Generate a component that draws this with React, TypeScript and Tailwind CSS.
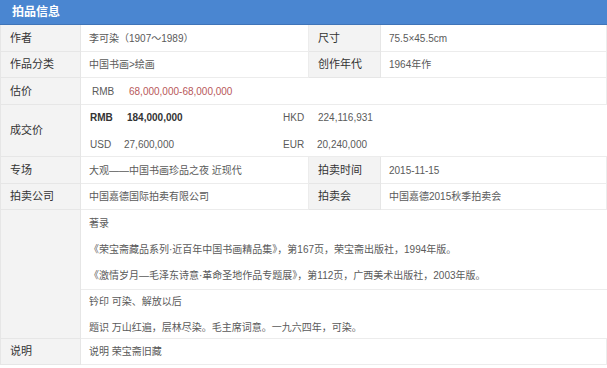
const font = { fontFamily: '"Liberation Sans", "Noto Sans CJK SC", sans-serif' };

const Label = ({ children, className = "" }: { children?: React.ReactNode; className?: string }) => (
  <div className={`bg-[#f3f3f3] border-b border-r border-[#e6e6e6] pl-[9px] flex items-center text-[11px] text-[#333] ${className}`}>
    {children}
  </div>
);

const Value = ({ children, className = "" }: { children?: React.ReactNode; className?: string }) => (
  <div className={`bg-white border-b border-r border-[#ececec] pl-[8px] flex items-center text-[10px] text-[#5a5a5a] ${className}`}>
    {children}
  </div>
);

export default function App() {
  return (
    <div className="w-[607px] h-[368px] bg-white overflow-hidden" style={font}>
      <div className="h-[25px] bg-[#4a86d1] flex items-center pl-[12px] text-[12px] font-bold text-white border-b border-[#3f74b8]">
        拍品信息
      </div>
      <div className="grid grid-cols-[80px_228px_72px_1fr] border-l border-[#e6e6e6]">
        <Label className="h-[27px]">作者</Label>
        <Value>李可染（1907～1989）</Value>
        <Label className="pl-[4px]">尺寸</Label>
        <Value className="pl-[6px]">75.5×45.5cm</Value>

        <Label className="h-[26px]">作品分类</Label>
        <Value>中国书画&gt;绘画</Value>
        <Label className="pl-[4px]">创作年代</Label>
        <Value className="pl-[6px]">1964年作</Value>

        <Label className="h-[27px]">估价</Label>
        <Value className="col-span-3 pl-[11px]">
          <span className="w-[37px]">RMB</span>
          <span className="text-[#b8585a]">68,000,000-68,000,000</span>
        </Value>

        <Label className="h-[52px]">成交价</Label>
        <div className="col-span-3 bg-white border-b border-[#ececec] pl-[9px] flex flex-col justify-center gap-[12px] text-[10px] text-[#5a5a5a]">
          <div className="flex">
            <span className="w-[193px] flex">
              <span className="w-[37px] font-bold text-[#333]">RMB</span>
              <span className="font-bold text-[#333]">184,000,000</span>
            </span>
            <span className="w-[35px]">HKD</span>
            <span>224,116,931</span>
          </div>
          <div className="flex">
            <span className="w-[193px] flex">
              <span className="w-[34px]">USD</span>
              <span>27,600,000</span>
            </span>
            <span className="w-[34px]">EUR</span>
            <span>20,240,000</span>
          </div>
        </div>

        <Label className="h-[27px]">专场</Label>
        <Value>大观——中国书画珍品之夜 近现代</Value>
        <Label className="pl-[4px]">拍卖时间</Label>
        <Value className="pl-[6px]">2015-11-15</Value>

        <Label className="h-[26px]">拍卖公司</Label>
        <Value>中国嘉德国际拍卖有限公司</Value>
        <Label className="pl-[4px]">拍卖会</Label>
        <Value className="pl-[6px]">中国嘉德2015秋季拍卖会</Value>

        <Label className="row-span-2" />
        <div className="col-span-3 h-[80px] bg-white border-b border-[#ececec] pl-[8px] flex flex-col justify-center gap-[11px] text-[10px] text-[#5a5a5a]">
          <div>著录</div>
          <div>《荣宝斋藏品系列·近百年中国书画精品集》，第167页，荣宝斋出版社，1994年版。</div>
          <div>《激情岁月—毛泽东诗意·革命圣地作品专题展》，第112页，广西美术出版社，2003年版。</div>
        </div>
        <div className="col-span-3 h-[49px] bg-white border-b border-[#ececec] pl-[8px] flex flex-col justify-center gap-[11px] text-[10px] text-[#5a5a5a]">
          <div>钤印 可染、解放以后</div>
          <div>题识 万山红遍，层林尽染。毛主席词意。一九六四年，可染。</div>
        </div>

        <Label className="h-[26px]">说明</Label>
        <Value className="col-span-3">说明 荣宝斋旧藏</Value>
      </div>
    </div>
  );
}
